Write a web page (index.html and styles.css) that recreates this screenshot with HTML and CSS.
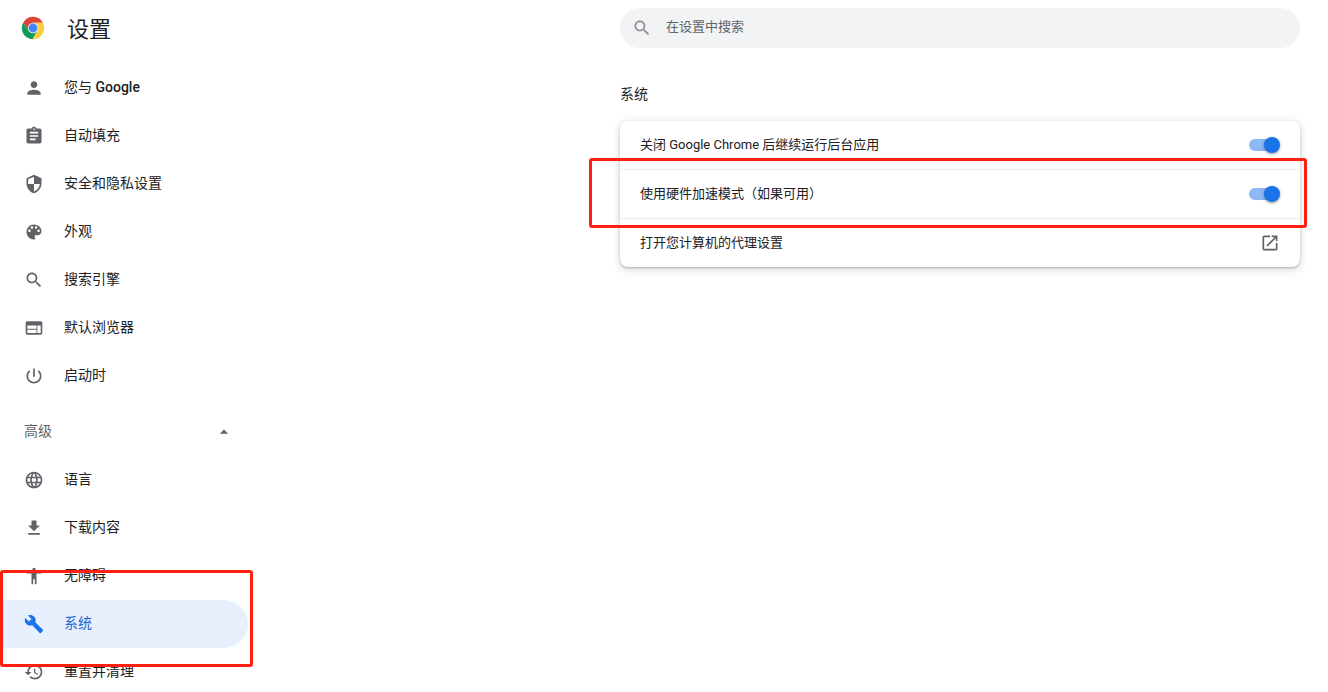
FILE: index.html
```html
<!DOCTYPE html>
<html lang="zh-CN">
<head>
<meta charset="utf-8">
<title>设置</title>
<link rel="stylesheet" href="styles.css">
</head>
<body>
<div class="app">
  <aside class="sidebar">
    <header class="brand">
      <svg class="logo" viewBox="0 0 48 48" aria-hidden="true">
        <path fill="#db4437" d="M24 13.500H43.800A22.400 22.400 0 0 0 4.600 12.800L14.900 29.250 24 24Z"/>
        <path fill="#0f9d58" d="M14.900 29.250 4.600 12.800A22.400 22.400 0 0 0 23 46.400L33.100 29.250 24 24Z"/>
        <path fill="#ffcd40" d="M24 13.500H43.800A22.400 22.400 0 0 1 23 46.400L33.100 29.250 24 24Z"/>
        <circle cx="24" cy="24" r="10.500" fill="#e4ebf5"/>
        <circle cx="24" cy="24" r="8.800" fill="#4285f4"/>
      </svg>
      <h1 class="brand-title">设置</h1>
    </header>
    <nav class="menu">
      <a class="menu-item" href="#people"><svg class="icon" viewBox="0 0 24 24"><path d="M12 12c2.210 0 4-1.790 4-4s-1.790-4-4-4-4 1.790-4 4 1.790 4 4 4zm0 2c-2.670 0-8 1.340-8 4v2h16v-2c0-2.660-5.330-4-8-4z"/></svg><span class="menu-text">您与 <span class="latin">Google</span></span></a>
      <a class="menu-item" href="#autofill"><svg class="icon" viewBox="0 0 24 24"><path d="M19 3h-4.180C14.400 1.840 13.300 1 12 1s-2.400.840-2.820 2H5c-1.100 0-2 .900-2 2v14c0 1.100.900 2 2 2h14c1.100 0 2-.900 2-2V5c0-1.100-.900-2-2-2zm-7 0c.550 0 1 .450 1 1s-.450 1-1 1-1-.450-1-1 .450-1 1-1zm2 14H7v-2h7v2zm3-4H7v-2h10v2zm0-4H7V7h10v2z"/></svg><span class="menu-text">自动填充</span></a>
      <a class="menu-item" href="#privacy"><svg class="icon" viewBox="0 0 24 24"><path d="M12 1 3 5v6c0 5.550 3.840 10.740 9 12 5.160-1.260 9-6.450 9-12V5l-9-4zm0 10.990h7c-.530 4.120-3.280 7.790-7 8.940V12H5V6.300l7-3.110v8.800z"/></svg><span class="menu-text">安全和隐私设置</span></a>
      <a class="menu-item" href="#appearance"><svg class="icon" viewBox="0 0 24 24"><path d="M12 3c-4.970 0-9 4.030-9 9s4.030 9 9 9c.830 0 1.500-.670 1.500-1.500 0-.390-.150-.740-.390-1.010-.230-.260-.380-.610-.380-.990 0-.830.670-1.500 1.500-1.500H16c2.760 0 5-2.240 5-5 0-4.420-4.030-8-9-8zm-5.500 9c-.830 0-1.500-.670-1.500-1.500S5.670 9 6.500 9 8 9.670 8 10.500 7.330 12 6.500 12zm3-4C8.670 8 8 7.330 8 6.500S8.670 5 9.500 5s1.500.670 1.500 1.500S10.330 8 9.500 8zm5 0c-.830 0-1.500-.670-1.500-1.500S13.670 5 14.500 5s1.500.670 1.500 1.500S15.330 8 14.500 8zm3 4c-.830 0-1.500-.670-1.500-1.500S16.670 9 17.500 9s1.500.670 1.500 1.500-.670 1.500-1.500 1.500z"/></svg><span class="menu-text">外观</span></a>
      <a class="menu-item" href="#search"><svg class="icon" viewBox="0 0 24 24"><path d="M15.500 14h-.790l-.280-.270C15.410 12.590 16 11.110 16 9.500 16 5.910 13.090 3 9.500 3S3 5.910 3 9.500 5.910 16 9.500 16c1.610 0 3.090-.590 4.230-1.570l.270.280v.790l5 4.990L20.490 19l-4.990-5zm-6 0C7.010 14 5 11.990 5 9.500S7.010 5 9.500 5 14 7.010 14 9.500 11.990 14 9.500 14z"/></svg><span class="menu-text">搜索引擎</span></a>
      <a class="menu-item" href="#browser"><svg class="icon" viewBox="0 0 24 24"><path d="M20 4H4c-1.100 0-1.990.900-1.990 2L2 18c0 1.100.900 2 2 2h16c1.100 0 2-.900 2-2V6c0-1.100-.900-2-2-2zm-5 14H4v-4h11v4zm0-5H4V9h11v4zm5 5h-4V9h4v9z"/></svg><span class="menu-text">默认浏览器</span></a>
      <a class="menu-item" href="#startup"><svg class="icon" viewBox="0 0 24 24"><path d="M13 3h-2v10h2V3zm4.830 2.170-1.420 1.420C17.990 7.860 19 9.810 19 12c0 3.870-3.130 7-7 7s-7-3.130-7-7c0-2.190 1.010-4.140 2.580-5.420L6.170 5.170C4.230 6.820 3 9.260 3 12c0 4.970 4.030 9 9 9s9-4.030 9-9c0-2.740-1.230-5.180-3.170-6.830z"/></svg><span class="menu-text">启动时</span></a>
    </nav>
    <button class="advanced" type="button" aria-expanded="true">
      <span class="menu-text">高级</span>
      <svg class="icon" viewBox="0 0 24 24"><path d="m7 14 5-5 5 5z"/></svg>
    </button>
    <nav class="menu">
      <a class="menu-item" href="#languages"><svg class="icon" viewBox="0 0 24 24"><path d="M11.990 2C6.470 2 2 6.480 2 12s4.470 10 9.990 10C17.520 22 22 17.520 22 12S17.520 2 11.990 2zm6.930 6h-2.950c-.320-1.250-.780-2.450-1.380-3.560 1.840.630 3.370 1.910 4.330 3.560zM12 4.040c.830 1.200 1.480 2.530 1.910 3.960h-3.820c.430-1.430 1.080-2.760 1.910-3.960zM4.260 14C4.100 13.360 4 12.690 4 12s.100-1.360.260-2h3.380c-.080.660-.140 1.320-.140 2s.060 1.340.140 2H4.260zm.820 2h2.950c.320 1.250.780 2.450 1.380 3.560-1.840-.630-3.370-1.900-4.330-3.560zm2.950-8H5.080c.960-1.660 2.490-2.930 4.330-3.560C8.810 5.550 8.350 6.750 8.030 8zM12 19.960c-.830-1.200-1.480-2.530-1.910-3.960h3.820c-.430 1.430-1.080 2.760-1.910 3.960zM14.340 14H9.660c-.090-.660-.160-1.320-.160-2s.070-1.350.160-2h4.680c.090.650.160 1.320.160 2s-.070 1.340-.160 2zm.250 5.560c.600-1.110 1.060-2.310 1.380-3.560h2.950c-.960 1.650-2.490 2.930-4.330 3.560zM16.360 14c.080-.660.140-1.320.140-2s-.060-1.340-.140-2h3.380c.160.640.260 1.310.260 2s-.100 1.360-.260 2h-3.380z"/></svg><span class="menu-text">语言</span></a>
      <a class="menu-item" href="#downloads"><svg class="icon" viewBox="0 0 24 24"><path d="M19 9h-4V3H9v6H5l7 7 7-7zM5 18v2h14v-2H5z"/></svg><span class="menu-text">下载内容</span></a>
      <a class="menu-item" href="#accessibility"><svg class="icon" viewBox="0 0 24 24"><path d="M12 2c1.100 0 2 .900 2 2s-.900 2-2 2-2-.900-2-2 .900-2 2-2zm9 7h-6v13h-2v-6h-2v6H9V9H3V7h18v2z"/></svg><span class="menu-text">无障碍</span></a>
      <a class="menu-item selected" href="#system" aria-current="page"><svg class="icon" viewBox="0 0 24 24"><path d="m22.700 19-9.100-9.100c.900-2.300.400-5-1.500-6.900-2-2-5-2.400-7.400-1.300L9 6 6 9 1.600 4.700C.400 7.100.900 10.100 2.900 12.100c1.900 1.900 4.600 2.400 6.900 1.500l9.100 9.100c.400.400 1 .400 1.400 0l2.300-2.300c.500-.400.500-1.100.100-1.400z"/></svg><span class="menu-text">系统</span><span class="marker marker-menu"></span></a>
      <a class="menu-item" href="#reset"><svg class="icon" viewBox="0 0 24 24"><path d="M13 3c-4.970 0-9 4.030-9 9H1l3.890 3.890.070.140L9 12H6c0-3.870 3.130-7 7-7s7 3.130 7 7-3.130 7-7 7c-1.930 0-3.680-.790-4.940-2.060l-1.420 1.420C8.270 19.990 10.510 21 13 21c4.970 0 9-4.030 9-9s-4.030-9-9-9zm-1 5v5l4.280 2.540.720-1.210-3.500-2.080V8H12z"/></svg><span class="menu-text">重置并清理</span></a>
    </nav>
  </aside>
  <main class="main">
    <div class="content">
      <label class="search">
        <svg class="icon" viewBox="0 0 24 24" aria-hidden="true"><path d="M15.500 14h-.790l-.280-.270C15.410 12.590 16 11.110 16 9.500 16 5.910 13.090 3 9.500 3S3 5.910 3 9.500 5.910 16 9.500 16c1.610 0 3.090-.590 4.230-1.570l.270.280v.790l5 4.990L20.490 19l-4.990-5zm-6 0C7.010 14 5 11.990 5 9.500S7.010 5 9.500 5 14 7.010 14 9.500 11.990 14 9.500 14z"/></svg>
        <input class="search-input" type="search" placeholder="在设置中搜索" aria-label="在设置中搜索">
      </label>
      <h2 class="section-title">系统</h2>
      <section class="card">
        <div class="row">
          <label for="background">关闭 Google Chrome 后继续运行后台应用</label>
          <input class="toggle" id="background" type="checkbox" role="switch" checked>
        </div>
        <div class="row">
          <label for="hardware">使用硬件加速模式（如果可用）</label>
          <input class="toggle" id="hardware" type="checkbox" role="switch" checked>
          <span class="marker marker-row"></span>
        </div>
        <a class="row" href="#proxy">
          <span>打开您计算机的代理设置</span>
          <svg class="icon" viewBox="0 0 24 24"><path d="M19 19H5V5h7V3H5c-1.110 0-2 .900-2 2v14c0 1.100.890 2 2 2h14c1.100 0 2-.900 2-2v-7h-2v7zM14 3v2h3.590l-9.830 9.830 1.410 1.410L19 6.410V10h2V3h-7z"/></svg>
        </a>
      </section>
    </div>
  </main>
</div>
</body>
</html>
```
FILE: styles.css
```css
* { box-sizing: border-box; }

body {
  margin: 0;
  background: #fff;
  color: #202124;
  font-family: Roboto, "Noto Sans CJK SC", sans-serif;
  font-size: 13px;
  line-height: 20px;
}

.app {
  display: flex;
  height: 100vh;
  overflow: hidden;
}

a { color: inherit; text-decoration: none; }

.icon {
  flex: none;
  width: 20px;
  height: 20px;
  fill: #5f6368;
}

.sidebar { flex: none; width: 266px; }

.brand {
  display: flex;
  align-items: center;
  gap: 22px;
  height: 56px;
  padding-left: 21px;
  margin-bottom: 8px;
}

.logo { width: 24px; height: 24px; }

.brand-title {
  margin: 0;
  padding-top: 4px;
  font-size: 22px;
  font-weight: 400;
  line-height: 32px;
}

.menu-item {
  position: relative;
  display: flex;
  align-items: center;
  gap: 20px;
  height: 48px;
  margin-right: 18px;
  padding-left: 24px;
  border-radius: 0 24px 24px 0;
  font-size: 14px;
}

.menu-text { padding-bottom: 2px; }

.latin { font-weight: 500; }

.selected { background: #e8f0fe; color: #1967d2; }
.selected .icon { fill: #1a73e8; }

.advanced {
  display: flex;
  align-items: center;
  justify-content: space-between;
  width: 210px;
  height: 48px;
  margin: 8px 0 0 24px;
  padding: 0;
  border: 0;
  background: none;
  color: #5f6368;
  font: inherit;
  font-size: 14px;
}

.main { flex: 1; padding: 8px 28px; }

.content { max-width: 680px; margin-left: auto; }

.search {
  display: flex;
  align-items: center;
  gap: 14px;
  height: 40px;
  padding: 0 12px;
  border-radius: 20px;
  background: #f1f3f4;
}

.search .icon { fill: #8b8e92; }

.search-input {
  flex: 1;
  padding: 0 0 2px;
  border: 0;
  outline: 0;
  background: none;
  color: inherit;
  font: inherit;
}

.search-input::placeholder { color: #5f6368; }

.section-title {
  margin: 36px 0 17px;
  font-size: 14px;
  font-weight: 400;
  line-height: 20px;
}

.card {
  border-radius: 8px;
  box-shadow: 0 1px 2px rgba(60, 64, 67, .3), 0 2px 6px 2px rgba(60, 64, 67, .15);
}

.row {
  position: relative;
  display: flex;
  align-items: center;
  justify-content: space-between;
  min-height: 48px;
  padding: 0 20px;
}

.row + .row { min-height: 49px; border-top: 1px solid #ececec; }

.toggle {
  appearance: none;
  position: relative;
  width: 31px;
  height: 16px;
  margin: 0;
}

.toggle::before {
  content: "";
  position: absolute;
  top: 2px;
  left: 0;
  width: 28px;
  height: 12px;
  border-radius: 6px;
  background: #8cb8f3;
}

.toggle::after {
  content: "";
  position: absolute;
  top: 0;
  right: 0;
  width: 16px;
  height: 16px;
  border-radius: 50%;
  background: #1a73e8;
  box-shadow: 0 1px 3px rgba(0, 0, 0, .4);
}

.marker {
  position: absolute;
  z-index: 1;
  border: 3px solid #ff2010;
  border-radius: 3px;
  pointer-events: none;
}

.marker-menu { inset: -30px -5px -19px 0; }
.marker-row { inset: -12px -7px -10px -31px; }
```
